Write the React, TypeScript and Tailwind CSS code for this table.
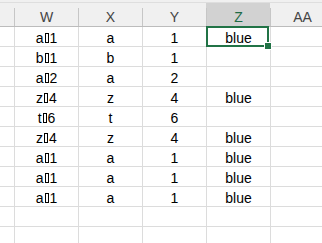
import React from "react"

const cols = ["W", "X", "Y", "Z", "AA"]

const rows: string[][] = [
    ["a|1", "a", "1", "blue"],
    ["b|1", "b", "1", ""],
    ["a|2", "a", "2", ""],
    ["z|4", "z", "4", "blue"],
    ["t|6", "t", "6", ""],
    ["z|4", "z", "4", "blue"],
    ["a|1", "a", "1", "blue"],
    ["a|1", "a", "1", "blue"],
    ["a|1", "a", "1", "blue"],
    ["", "", "", ""],
    ["", "", "", ""],
]

// the first column holds a char with no glyph, shown as a box
function CellText({ value }: { value: string }) {
    if (!value.includes("|")) return <>{value}</>
    const [a, b] = value.split("|")
    return (
        <>
            {a}
            <span className="inline-block w-[4px] h-[10px] border border-current mx-[1px] align-[-1px]" />
            {b}
        </>
    )
}

export default function App() {
    return (
        <main
            className="w-[322px] h-[243px] overflow-hidden bg-white text-black"
            style={{ fontFamily: '"Liberation Sans", Arial, sans-serif' }}
        >
            <div className="h-[27px] bg-[#f0f0f0] pt-[2px]">
                <div className="flex h-full border-t border-b border-t-[#dedede] border-b-[#bcbcbc]">
                    <div className="w-[14px] shrink-0" />
                    {cols.map((c) => (
                        <div
                            key={c}
                            className={`flex w-[64px] shrink-0 h-full ${c === "Z" ? "bg-[#d2d2d2]" : ""}`}
                        >
                            <div className="w-px h-[18px] self-end bg-[#c6c6c6]" />
                            <div
                                className={`flex-1 flex items-center justify-center pt-[6px] text-[14px] ${c === "Z" ? "text-[#1e6b45]" : "text-[#444]"}`}
                            >
                                {c}
                            </div>
                        </div>
                    ))}
                </div>
            </div>

            {rows.map((r, i) => (
                <div key={i} className="flex h-[20px] border-b border-[#dcdcdc]">
                    <div className="w-[14px] shrink-0" />
                    {[...r, ""].map((v, j) => (
                        <div
                            key={j}
                            className="relative w-[64px] shrink-0 border-l border-[#dcdcdc] flex items-center justify-center pt-[2px] text-[14px] leading-none"
                        >
                            <CellText value={v} />
                            {i === 0 && j === 3 && (
                                <div className="absolute -left-[1px] -top-[1px] right-[1px] -bottom-[1px] border-2 border-[#217346] z-10">
                                    <div className="absolute -right-[4px] -bottom-[4px] w-[6px] h-[6px] bg-[#217346] outline outline-1 outline-white" />
                                </div>
                            )}
                        </div>
                    ))}
                </div>
            ))}
        </main>
    )
}
